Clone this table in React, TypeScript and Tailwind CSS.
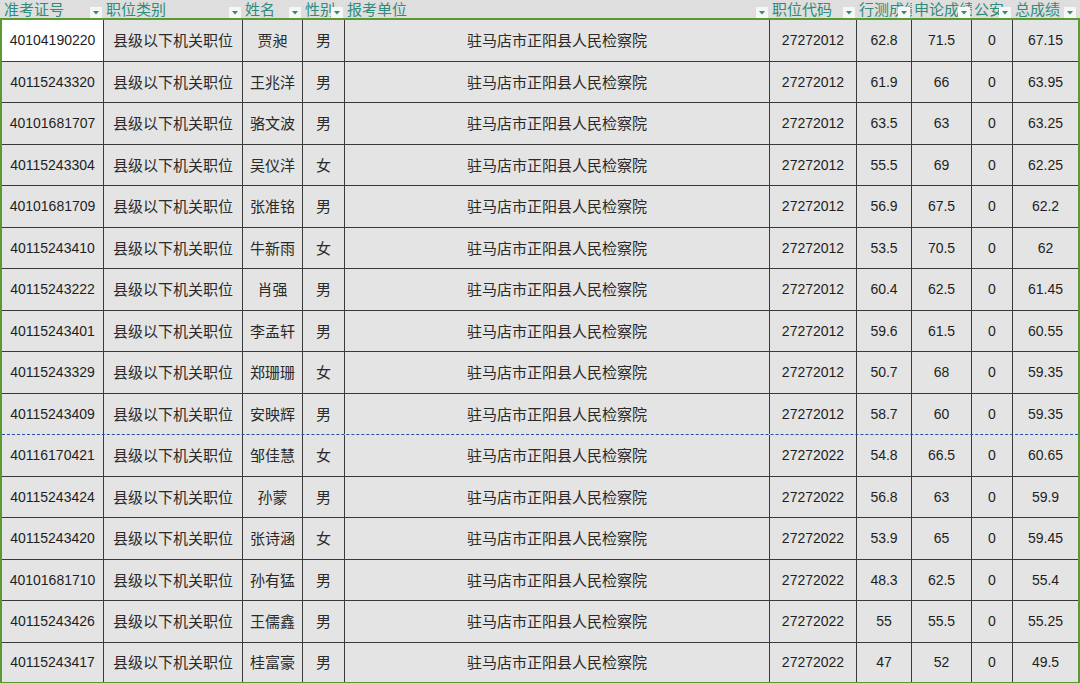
import React from "react";

type Row = [string, string, string, string, string, string, string];

const rows: Row[] = [
  ["40104190220", "贾昶", "男", "27272012", "62.8", "71.5", "67.15"],
  ["40115243320", "王兆洋", "男", "27272012", "61.9", "66", "63.95"],
  ["40101681707", "骆文波", "男", "27272012", "63.5", "63", "63.25"],
  ["40115243304", "吴仪洋", "女", "27272012", "55.5", "69", "62.25"],
  ["40101681709", "张准铭", "男", "27272012", "56.9", "67.5", "62.2"],
  ["40115243410", "牛新雨", "女", "27272012", "53.5", "70.5", "62"],
  ["40115243222", "肖强", "男", "27272012", "60.4", "62.5", "61.45"],
  ["40115243401", "李孟轩", "男", "27272012", "59.6", "61.5", "60.55"],
  ["40115243329", "郑珊珊", "女", "27272012", "50.7", "68", "59.35"],
  ["40115243409", "安映辉", "男", "27272012", "58.7", "60", "59.35"],
  ["40116170421", "邹佳慧", "女", "27272022", "54.8", "66.5", "60.65"],
  ["40115243424", "孙蒙", "男", "27272022", "56.8", "63", "59.9"],
  ["40115243420", "张诗涵", "女", "27272022", "53.9", "65", "59.45"],
  ["40101681710", "孙有猛", "男", "27272022", "48.3", "62.5", "55.4"],
  ["40115243426", "王儒鑫", "男", "27272022", "55", "55.5", "55.25"],
  ["40115243417", "桂富豪", "男", "27272022", "47", "52", "49.5"],
];

const headers: { label: string; w: string }[] = [
  { label: "准考证号", w: "w-[102px]" },
  { label: "职位类别", w: "w-[139px]" },
  { label: "姓名", w: "w-[60px]" },
  { label: "性别", w: "w-[42px]" },
  { label: "报考单位", w: "w-[425px]" },
  { label: "职位代码", w: "w-[87px]" },
  { label: "行测成绩", w: "w-[55px]" },
  { label: "申论成绩", w: "w-[60px]" },
  { label: "公安", w: "w-[41px]" },
  { label: "总成绩", w: "w-[65px]" },
];

function Drop() {
  return (
    <div className="absolute right-[2px] top-[7px] w-[12px] h-[11px] bg-[#f6f6f6] flex items-center justify-center">
      <svg width="6" height="4" viewBox="0 0 6 4">
        <polygon points="0,0 6,0 3,3.5" fill="#2f8c6c" />
      </svg>
    </div>
  );
}

const font = "font-['Liberation_Sans','Noto_Sans_CJK_SC',sans-serif]";

export default function App() {
  return (
    <div className={`w-[1080px] h-[683px] overflow-hidden bg-[#e4e4e4] ${font}`}>
      <div className="flex h-[20px] bg-[#dedede] border-b-2 border-[#5a9a32] pl-[2px]">
        {headers.map((h, i) => (
          <div key={i} className={`relative ${h.w} shrink-0 overflow-hidden whitespace-nowrap pl-[2px] text-[15px] leading-[18px] text-[#2f8c7c] font-['Noto_Sans_CJK_SC',sans-serif]`}>
            {h.label}
            <Drop />
          </div>
        ))}
      </div>
      <div className="border-l-2 border-r-2 border-[#5a9a32] w-[1080px]">
        {rows.map((r, i) => {
          const last = i === rows.length - 1;
          const h = i % 2 === 0 ? "h-[42px]" : "h-[41px]";
          const bb = last
            ? "border-b-2 border-b-[#5a9a32]"
            : i === 9
            ? "border-b border-dashed border-b-[#2452a8]"
            : "border-b border-b-[#3a3a3a]";
          const num = "text-[14px] text-[#1e1e1e]";
          const cn = "text-[15px] text-[#2a2a2a] font-['Noto_Sans_CJK_SC',sans-serif]";
          const cell = "shrink-0 flex items-center justify-center border-r border-r-[#3a3a3a]";
          return (
            <div key={i} className={`flex ${h} ${bb}`}>
              <div className={`${cell} w-[102px] ${num} ${i === 0 ? "bg-white" : ""}`}>{r[0]}</div>
              <div className={`${cell} w-[139px] ${cn}`}>县级以下机关职位</div>
              <div className={`${cell} w-[60px] ${cn}`}>{r[1]}</div>
              <div className={`${cell} w-[42px] ${cn}`}>{r[2]}</div>
              <div className={`${cell} w-[425px] ${cn}`}>驻马店市正阳县人民检察院</div>
              <div className={`${cell} w-[87px] ${num}`}>{r[3]}</div>
              <div className={`${cell} w-[55px] ${num}`}>{r[4]}</div>
              <div className={`${cell} w-[60px] ${num}`}>{r[5]}</div>
              <div className={`${cell} w-[41px] ${num}`}>0</div>
              <div className={`shrink-0 flex items-center justify-center w-[65px] ${num}`}>{r[6]}</div>
            </div>
          );
        })}
      </div>
    </div>
  );
}
